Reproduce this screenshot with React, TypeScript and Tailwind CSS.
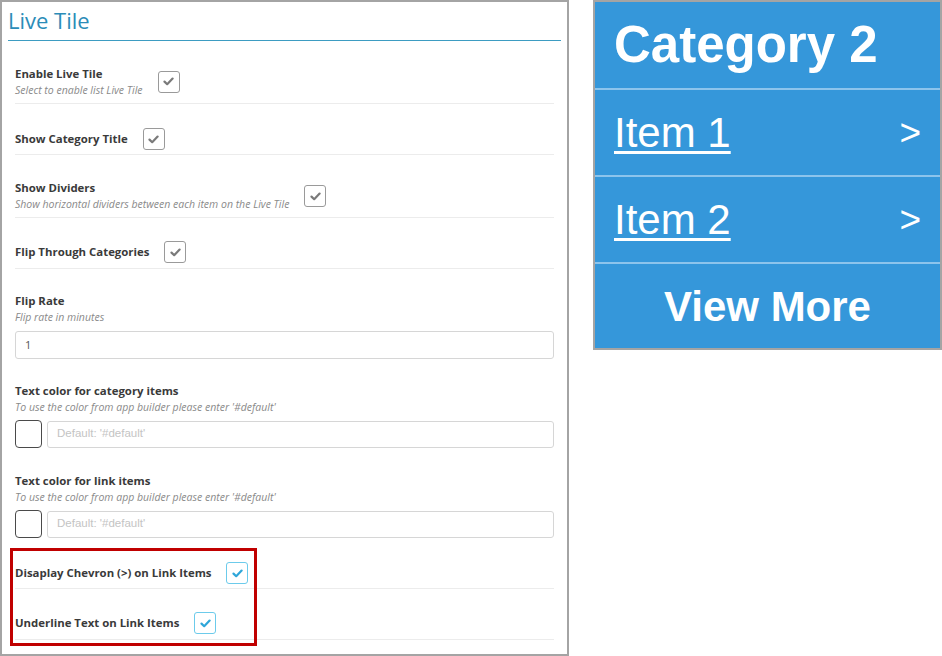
import type { ReactNode } from "react"

const sans = { fontFamily: '"Open Sans", "Noto Sans", sans-serif' }

function Tick({ blue }: { blue?: boolean }) {
  return (
    <div
      className={
        "ml-[15px] flex h-[22px] w-[22px] shrink-0 items-center justify-center rounded-[3px] border bg-white " +
        (blue ? "border-[#6ccbeb]" : "border-[#9a9a9a]")
      }
    >
      <svg width="11" height="9" viewBox="0 0 11 9">
        <path
          d="M1.5 4.6 L4.2 7.2 L9.6 1.6"
          fill="none"
          stroke={blue ? "#2ea6d9" : "#7a7a7a"}
          strokeWidth="2.2"
          strokeLinecap="round"
          strokeLinejoin="round"
        />
      </svg>
    </div>
  )
}

function Label({ children }: { children: ReactNode }) {
  return <div className="text-[11.4px] font-bold leading-[16px] text-[#3a3a3a]">{children}</div>
}

function Hint({ children }: { children: ReactNode }) {
  return <div className="text-[10.5px] italic leading-[16px] text-[#8a8a8a]">{children}</div>
}

function CheckRow({ label, hint, blue, className }: { label: string; hint?: string; blue?: boolean; className: string }) {
  return (
    <div className={"flex items-center border-b border-[#ececec] " + className}>
      <div>
        <Label>{label}</Label>
        {hint && <Hint>{hint}</Hint>}
      </div>
      <Tick blue={blue} />
    </div>
  )
}

function ColorField({ className }: { className: string }) {
  return (
    <div className={"flex items-center gap-[5px] " + className}>
      <div className="h-[28px] w-[27px] shrink-0 rounded-[4px] border border-[#4a4a4a] bg-white" />
      <div
        className="flex h-[27px] flex-1 items-center rounded-[3px] border border-[#d6d6d6] px-[9px] text-[11.5px] text-[#c4c4c4]"
        style={{ fontFamily: '"Liberation Sans", Arial, sans-serif' }}
      >
        Default: '#default'
      </div>
    </div>
  )
}

function SettingsPanel() {
  return (
    <div className="relative h-[656px] w-[569px] shrink-0 border-2 border-[#a4a4a4] bg-white" style={sans}>
      <div className="mx-[6px] h-[39px] border-b border-[#3d9cc2] pt-[5px]">
        <div className="text-[22px] font-normal leading-[26px] text-[#2b8cb8]">Live Tile</div>
      </div>

      <div className="px-[13px]">
        <CheckRow className="mt-[19px] h-[44px]" label="Enable Live Tile" hint="Select to enable list Live Tile" />
        <CheckRow className="mt-[20px] h-[31px]" label="Show Category Title" />
        <CheckRow
          className="mt-[20px] h-[43px]"
          label="Show Dividers"
          hint="Show horizontal dividers between each item on the Live Tile"
        />
        <CheckRow className="mt-[18px] h-[33px]" label="Flip Through Categories" />

        <div className="mt-[24px]">
          <Label>Flip Rate</Label>
          <Hint>Flip rate in minutes</Hint>
          <div className="mt-[6px] flex h-[28px] items-center rounded-[3px] border border-[#d6d6d6] px-[9px] text-[11px] text-[#555]">
            1
          </div>
        </div>

        <div className="mt-[24px]">
          <Label>Text color for category items</Label>
          <Hint>To use the color from app builder please enter '#default'</Hint>
          <ColorField className="mt-[5px]" />
        </div>

        <div className="mt-[25px]">
          <Label>Text color for link items</Label>
          <Hint>To use the color from app builder please enter '#default'</Hint>
          <ColorField className="mt-[5px]" />
        </div>

        <CheckRow className="mt-[20px] h-[31px]" label="Disaplay Chevron (>) on Link Items" blue />
        <CheckRow className="mt-[18px] h-[33px]" label="Underline Text on Link Items" blue />
      </div>

      {/* callout around the two new options */}
      <div className="absolute left-[8px] top-[546px] h-[98px] w-[247px] border-[3px] border-[#c00000]" />
    </div>
  )
}

function TileRow({ children, last }: { children: ReactNode; last?: boolean }) {
  return (
    <div className={"flex h-[87px] items-center px-[19px] " + (last ? "" : "border-b-2 border-[#8cc4ec]")}>
      {children}
    </div>
  )
}

function LiveTile() {
  return (
    <div
      className="h-[350px] w-[349px] border-2 border-[#a4a4a4] bg-[#3597da] text-white"
      style={{ fontFamily: '"Liberation Sans", Arial, sans-serif' }}
    >
      <div className="flex h-[88px] items-center border-b-2 border-[#8cc4ec] px-[19px] pb-[2px]">
        <span className="text-[51px] font-bold leading-none">Category 2</span>
      </div>
      <TileRow>
        <span className="flex-1 text-[42px] leading-none underline decoration-[3px] underline-offset-[4px]">Item 1</span>
        <span className="text-[37px] leading-none">&gt;</span>
      </TileRow>
      <TileRow>
        <span className="flex-1 text-[42px] leading-none underline decoration-[3px] underline-offset-[4px]">Item 2</span>
        <span className="text-[37px] leading-none">&gt;</span>
      </TileRow>
      <div className="flex h-[85px] items-center justify-center">
        <span className="text-[42px] font-bold leading-none">View More</span>
      </div>
    </div>
  )
}

export default function App() {
  return (
    <div className="flex h-[656px] w-[942px] items-start gap-[24px] bg-white">
      <SettingsPanel />
      <LiveTile />
    </div>
  )
}
